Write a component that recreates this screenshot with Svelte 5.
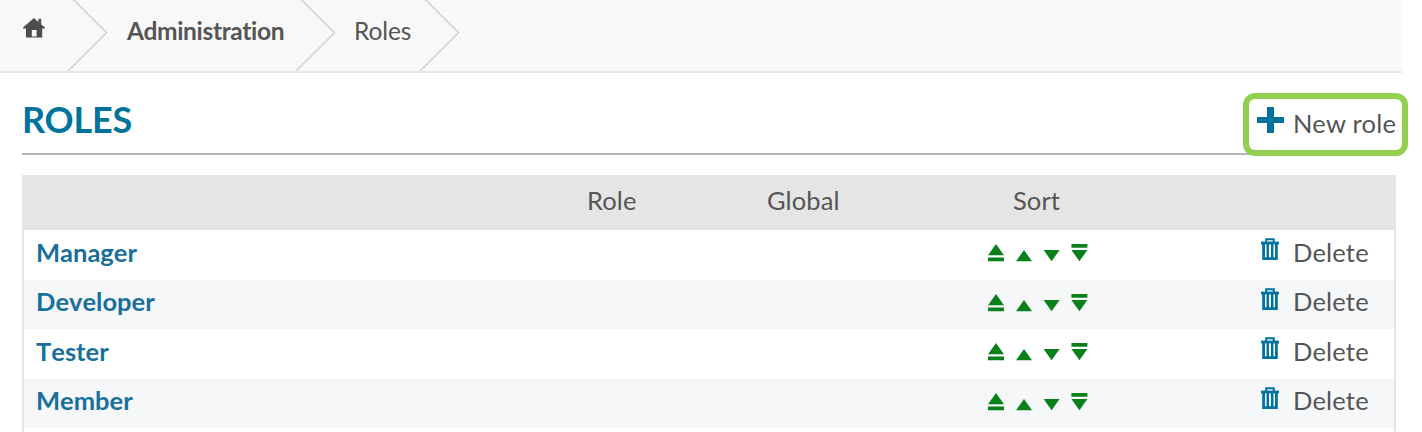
<script>
  const roles = ['Manager', 'Developer', 'Tester', 'Member'];
</script>

{#snippet chevron()}
  <svg class="chevron" width="42" height="72" viewBox="0 0 42 72">
    <path d="M5.7 -1 L39.5 32.7 L0.5 71.5" fill="none" stroke="#cfcfcf" stroke-width="1.4" />
  </svg>
{/snippet}

<div class="page">
  <nav class="crumbs">
    <svg class="home" width="22" height="20" viewBox="0 0 22 20">
      <path fill="#4d4d4d" fill-rule="evenodd" d="M11 0 L15.4 4 V.8 H18.2 V6.5 L22 9.6 V10.4 H19.2 V19.6 H3 V10.4 H0 V9.6Z M8.8 12 V18.4 H13.6 V12Z" />
    </svg>
    <span class="slot first">{@render chevron()}</span>
    <a class="admin" href="#admin">Administration</a>
    <span class="slot second">{@render chevron()}</span>
    <span class="current">Roles</span>
    <span class="slot third">{@render chevron()}</span>
  </nav>

  <header class="title">
    <h1>ROLES</h1>
    <button class="new">
      <svg width="27" height="26" viewBox="0 0 27 26"><path fill="#00739d" d="M10 0H17V10H27V16H17V26H10V16H0V10H10Z" /></svg>
      <span>New role</span>
    </button>
  </header>

  <div class="table">
    <div class="row head">
      <span></span><span>Role</span><span>Global</span><span class="sort-label">Sort</span><span></span>
    </div>
    {#each roles as role}
      <div class="row">
        <a class="name" href="#role">{role}</a>
        <span></span>
        <span></span>
        <svg class="sort" width="100" height="18" viewBox="0 0 100 18" fill="#08811b">
          <path d="M8 0L16 11.3H0Z M0 13.6H16V17.3H0Z" />
          <path d="M36 6L44 17.3H28Z" />
          <path d="M55.6 6H71.6L63.6 17.3Z" />
          <path d="M83.4 0H99.4V3.8H83.4Z M83.4 6H99.4L91.4 17.3Z" />
        </svg>
        <span class="delete">
          <svg width="18" height="23" viewBox="0 0 18 23" fill="none" stroke="#00739d">
            <path stroke-width="2" d="M5.2 4V1.2H12.8V4" />
            <path stroke-width="2.8" d="M0 5H18" />
            <path stroke-width="2.8" d="M2.6 5V20.6H15.4V5" />
            <path stroke-width="2.5" d="M6.8 6V20 M11.2 6V20" />
          </svg>
          <span>Delete</span>
        </span>
      </div>
    {/each}
  </div>
</div>

<style>
  :global(body) { background: #fff; }
  .page {
    box-sizing: border-box;
    width: 1422px;
    height: 432px;
    overflow: hidden;
    font: 25.5px/30px Lato, sans-serif;
    font-variant-ligatures: none;
    color: #555;
  }
  a { text-decoration: none; color: inherit; }
  .crumbs {
    box-sizing: border-box;
    width: 1402px;
    height: 73px;
    display: flex;
    align-items: flex-start;
    background: #f8f8f8;
    border-bottom: 2px solid #e7e7e7;
  }
  .home { margin: 18px 0 0 23px; flex: none; }
  .slot { flex: none; height: 71px; overflow: hidden; width: 42px; }
  .chevron { display: block; }
  .first { margin-left: 21.5px; }
  .admin { width: 168px; margin: 16px 0 0 18.5px; font-size: 24.5px; font-weight: 700; letter-spacing: -0.33px; flex: none; }
  .second { margin-left: -0.5px; }
  .current { width: 65px; margin: 16px 0 0 17.5px; font-size: 24.5px; letter-spacing: -0.1px; flex: none; }
  .title {
    box-sizing: border-box;
    width: 1374px;
    height: 82px;
    margin-left: 22px;
    display: flex;
    justify-content: space-between;
    border-bottom: 2px solid #b5b5b5;
  }
  h1 { margin: 25px 0 0; font-size: 36px; line-height: 42px; font-weight: 700; letter-spacing: -0.2px; color: #00739d; }
  .new {
    box-sizing: border-box;
    flex: none;
    width: 165px;
    height: 63px;
    margin: 20px -12px 0 0;
    padding: 0 0 0 8px;
    display: flex;
    align-items: flex-start;
    font: inherit;
    color: inherit;
    background: #fff;
    border: 6px solid #92d050;
    border-radius: 12px;
  }
  .new svg { margin: 8px 0 0; flex: none; }
  .new span { margin: 9px 0 0 9px; white-space: nowrap; letter-spacing: 0.25px; }
  .table {
    box-sizing: border-box;
    width: 1374px;
    height: 280px;
    margin: 19.5px 0 0 22px;
    border: solid #e5e5e5;
    border-width: 0 2px;
  }
  .row {
    display: grid;
    grid-template-columns: 563px 180px 221px 271px 135px;
    height: 49.6px;
    align-items: start;
  }
  .row:nth-child(odd) { background: #f5f7f9; }
  .row.head { height: 55.5px; background: #e5e5e5; }
  .head span { padding-top: 10px; letter-spacing: 0.1px; }
  .sort-label { padding-left: 25px; }
  .name { padding: 6.5px 0 0 12px; font-weight: 700; font-kerning: none; color: #18709a; }
  .sort { margin-top: 14px; }
  .delete { display: flex; align-items: flex-start; }
  .delete svg { margin: 8px 0 0 2px; flex: none; }
  .delete span { margin: 6.5px 0 0 14px; letter-spacing: 0.2px; }
</style>
